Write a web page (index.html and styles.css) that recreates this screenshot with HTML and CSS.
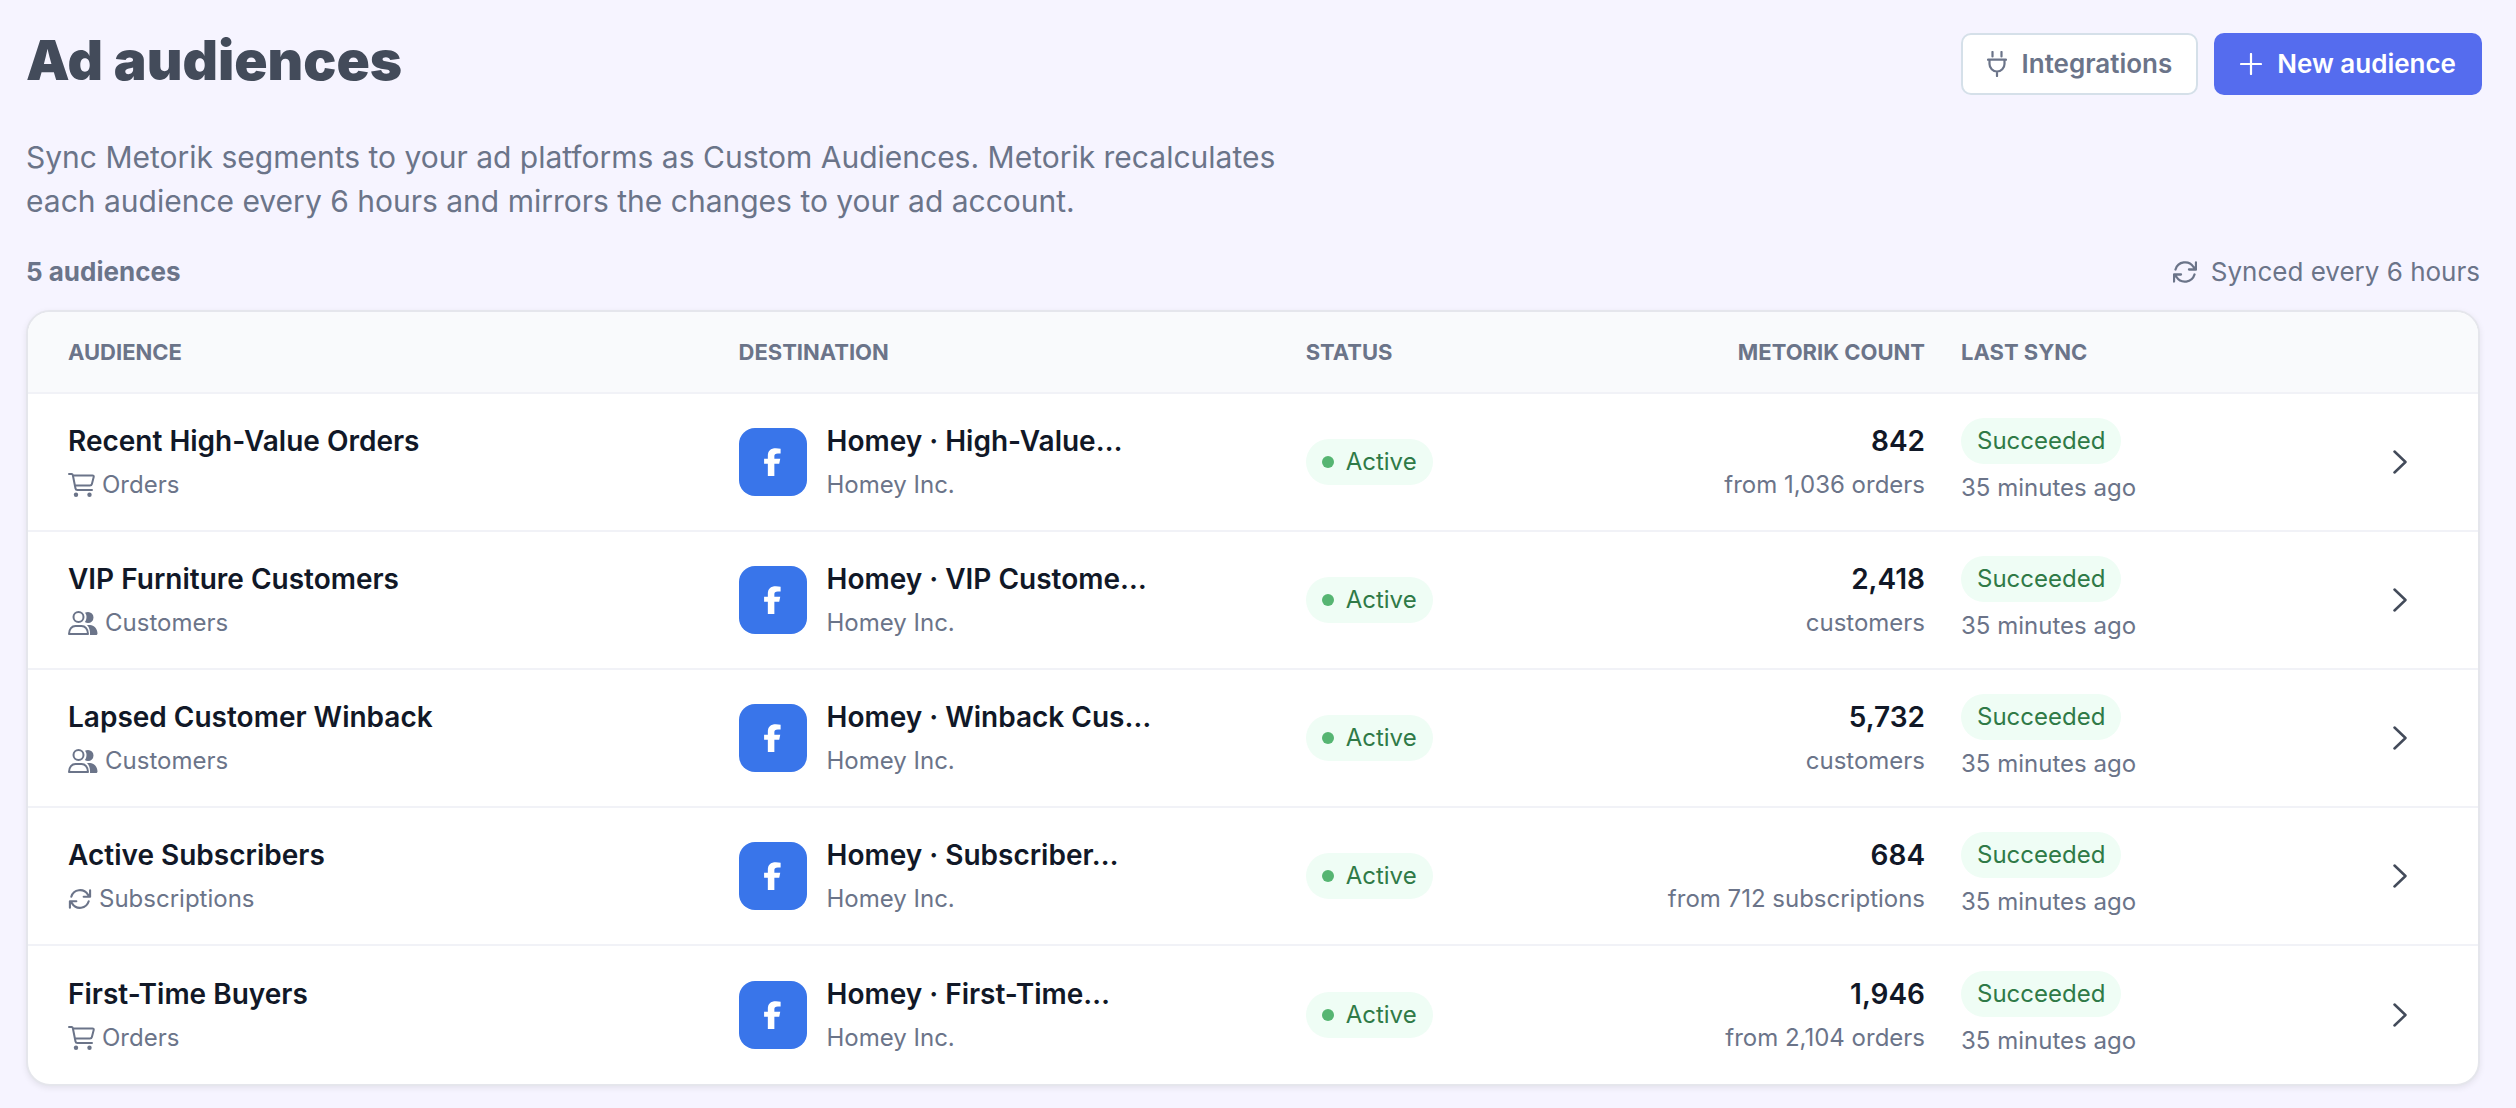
FILE: index.html
```html
<!DOCTYPE html>
<html lang="en">
<head>
<meta charset="utf-8">
<meta name="viewport" content="width=device-width, initial-scale=1">
<title>Ad audiences</title>
<link rel="stylesheet" href="styles.css">
</head>
<body>
<svg class="sprite" aria-hidden="true">
  <symbol id="i-cart" viewBox="0 0 27 24"><path d="M1 1h2.600q1 0 1.200 1l2.700 13.500q.3 1.500 1.800 1.500H24M5 2.500H24.500q1.600 0 1.200 1.500l-1.800 7q-.4 1.500-1.900 1.500H7" fill="none" stroke="currentColor" stroke-width="2" stroke-linecap="round" stroke-linejoin="round"/><circle cx="8" cy="21.700" r="2.200" fill="currentColor"/><circle cx="21.500" cy="21.700" r="2.200" fill="currentColor"/></symbol>
  <symbol id="i-users" viewBox="0 0 30 24"><circle cx="10.500" cy="6" r="5" fill="none" stroke="currentColor" stroke-width="2"/><path d="M1 23c0-5 3-8 6.500-8h6c3.500 0 6.500 3 6.500 8z" fill="none" stroke="currentColor" stroke-width="2" stroke-linejoin="round"/><path d="M17 1.800c1-.5 2-.8 3-.8a5.500 5.500 0 0 1 0 11c-1.200 0-2.300-.4-3.200-1 1.200-1.400 1.700-3.200 1.700-5 0-1.500-.5-3-1.500-4.200zM19 14h3c4 0 7.500 4 7.500 8.500 0 .8-.6 1.500-1.400 1.500H22c.3-4-.500-7.500-3-10z" fill="currentColor"/></symbol>
  <symbol id="i-sync" viewBox="0 0 24 24"><path d="M2.500 9.500A10 10 0 0 1 20.500 7l2.500 2.500M23 2.500v7h-7M21.500 14.500A10 10 0 0 1 3.500 17L1 14.500M1 21.500v-7h7" fill="none" stroke="currentColor" stroke-width="2.300" stroke-linecap="round" stroke-linejoin="round"/></symbol>
  <symbol id="i-fb" viewBox="0 0 18 30"><path d="M4 30V17H0v-5.500h4V8.600C4 3 7 .3 12.600.3c1.800 0 3.600.2 5.100.5v5h-2.900c-2.900 0-3.800 1-3.800 2.900v2.800h6.300L16.200 17H11v13z" fill="currentColor"/></symbol>
  <symbol id="i-chevron" viewBox="0 0 14 24"><path d="M1.500 1.500 12.500 12 1.500 22.500" fill="none" stroke="currentColor" stroke-width="2.500" stroke-linecap="round" stroke-linejoin="round"/></symbol>
</svg>
<main class="page">
  <header class="page-head">
    <h1 class="title">Ad audiences</h1>
    <div class="actions">
      <button type="button" class="btn btn-light"><svg class="icon-plug" viewBox="0 0 20 26" aria-hidden="true"><path d="M5.500 1v4.500M14.500 1v4.500M1 8.700h18M2.500 9v4a7.500 7.500 0 0 0 15 0V9M10 21v4" fill="none" stroke="currentColor" stroke-width="2.200" stroke-linecap="round"/></svg>Integrations</button>
      <button type="button" class="btn btn-primary"><svg class="icon-plus" viewBox="0 0 22 22" aria-hidden="true"><path d="M11 1v20M1 11h20" fill="none" stroke="currentColor" stroke-width="2.200" stroke-linecap="round"/></svg>New audience</button>
    </div>
  </header>
  <p class="intro">Sync Metorik segments to your ad platforms as Custom Audiences. Metorik recalculates each audience every 6 hours and mirrors the changes to your ad account.</p>
  <div class="summary">
    <strong class="total">5 audiences</strong>
    <span class="schedule"><svg class="icon-sync" aria-hidden="true"><use href="#i-sync"/></svg>Synced every 6 hours</span>
  </div>
  <div class="card">
    <table class="audiences">
      <thead>
        <tr><th class="c-name">Audience</th><th class="c-dest">Destination</th><th class="c-status">Status</th><th class="c-count">Metorik count</th><th class="c-sync">Last sync</th><th class="c-open" aria-label="Open"></th></tr>
      </thead>
      <tbody>
        <tr>
          <td class="c-name"><div class="name">Recent High-Value Orders</div><div class="sub"><svg class="icon-cart" aria-hidden="true"><use href="#i-cart"/></svg>Orders</div></td>
          <td><div class="dest"><span class="tile"><svg class="icon-fb" aria-hidden="true"><use href="#i-fb"/></svg></span><div><div class="name">Homey · High-Value…</div><div class="sub">Homey Inc.</div></div></div></td>
          <td><span class="pill"><span class="dot"></span>Active</span></td>
          <td class="c-count"><div class="name">842</div><div class="sub">from 1,036 orders</div></td>
          <td><span class="pill">Succeeded</span><div class="sub">35 minutes ago</div></td>
          <td class="c-open"><a class="open" href="#" aria-label="Open Recent High-Value Orders"><svg class="icon-chevron" aria-hidden="true"><use href="#i-chevron"/></svg></a></td>
        </tr>
        <tr>
          <td class="c-name"><div class="name">VIP Furniture Customers</div><div class="sub"><svg class="icon-users" aria-hidden="true"><use href="#i-users"/></svg>Customers</div></td>
          <td><div class="dest"><span class="tile"><svg class="icon-fb" aria-hidden="true"><use href="#i-fb"/></svg></span><div><div class="name">Homey · VIP Custome…</div><div class="sub">Homey Inc.</div></div></div></td>
          <td><span class="pill"><span class="dot"></span>Active</span></td>
          <td class="c-count"><div class="name">2,418</div><div class="sub">customers</div></td>
          <td><span class="pill">Succeeded</span><div class="sub">35 minutes ago</div></td>
          <td class="c-open"><a class="open" href="#" aria-label="Open VIP Furniture Customers"><svg class="icon-chevron" aria-hidden="true"><use href="#i-chevron"/></svg></a></td>
        </tr>
        <tr>
          <td class="c-name"><div class="name">Lapsed Customer Winback</div><div class="sub"><svg class="icon-users" aria-hidden="true"><use href="#i-users"/></svg>Customers</div></td>
          <td><div class="dest"><span class="tile"><svg class="icon-fb" aria-hidden="true"><use href="#i-fb"/></svg></span><div><div class="name">Homey · Winback Cus…</div><div class="sub">Homey Inc.</div></div></div></td>
          <td><span class="pill"><span class="dot"></span>Active</span></td>
          <td class="c-count"><div class="name">5,732</div><div class="sub">customers</div></td>
          <td><span class="pill">Succeeded</span><div class="sub">35 minutes ago</div></td>
          <td class="c-open"><a class="open" href="#" aria-label="Open Lapsed Customer Winback"><svg class="icon-chevron" aria-hidden="true"><use href="#i-chevron"/></svg></a></td>
        </tr>
        <tr>
          <td class="c-name"><div class="name">Active Subscribers</div><div class="sub"><svg class="icon-subs" aria-hidden="true"><use href="#i-sync"/></svg>Subscriptions</div></td>
          <td><div class="dest"><span class="tile"><svg class="icon-fb" aria-hidden="true"><use href="#i-fb"/></svg></span><div><div class="name">Homey · Subscriber…</div><div class="sub">Homey Inc.</div></div></div></td>
          <td><span class="pill"><span class="dot"></span>Active</span></td>
          <td class="c-count"><div class="name">684</div><div class="sub">from 712 subscriptions</div></td>
          <td><span class="pill">Succeeded</span><div class="sub">35 minutes ago</div></td>
          <td class="c-open"><a class="open" href="#" aria-label="Open Active Subscribers"><svg class="icon-chevron" aria-hidden="true"><use href="#i-chevron"/></svg></a></td>
        </tr>
        <tr>
          <td class="c-name"><div class="name">First-Time Buyers</div><div class="sub"><svg class="icon-cart" aria-hidden="true"><use href="#i-cart"/></svg>Orders</div></td>
          <td><div class="dest"><span class="tile"><svg class="icon-fb" aria-hidden="true"><use href="#i-fb"/></svg></span><div><div class="name">Homey · First-Time…</div><div class="sub">Homey Inc.</div></div></div></td>
          <td><span class="pill"><span class="dot"></span>Active</span></td>
          <td class="c-count"><div class="name">1,946</div><div class="sub">from 2,104 orders</div></td>
          <td><span class="pill">Succeeded</span><div class="sub">35 minutes ago</div></td>
          <td class="c-open"><a class="open" href="#" aria-label="Open First-Time Buyers"><svg class="icon-chevron" aria-hidden="true"><use href="#i-chevron"/></svg></a></td>
        </tr>
      </tbody>
    </table>
  </div>
</main>
</body>
</html>
```
FILE: styles.css
```css
* { box-sizing: border-box; }

body {
  margin: 0;
  background: #f6f4ff;
  color: #6b7489;
  font: 400 24px/36px Inter, "Liberation Sans", sans-serif;
}

svg { flex: none; display: block; }
.sprite { display: none; }

.page { padding: 33px 36px 22px 26px; }

.page-head {
  display: flex;
  align-items: flex-start;
  justify-content: space-between;
  margin-right: -2px;
}

.title {
  margin: 0;
  color: #434b5a;
  font: 900 55px/54px Inter, sans-serif;
}

.actions { display: flex; gap: 16px; }

.btn {
  display: flex;
  align-items: center;
  gap: 15px;
  height: 62px;
  padding: 0 26px;
  border: 0;
  border-radius: 10px;
  font: 600 26px/36px Inter, sans-serif;
}
.btn-light { background: #fff; color: #6b7489; border: 2px solid #d5e0e9; padding: 0 24px; }
.btn-primary { background: #556cee; color: #fff; }
.icon-plug { width: 20px; height: 26px; }
.icon-plus { width: 22px; height: 22px; }

.intro {
  max-width: 1280px;
  margin: 40px 0 0;
  font-size: 30px;
  line-height: 44px;
}

.summary {
  display: flex;
  align-items: center;
  justify-content: space-between;
  margin: 31px 0 20px;
  font-size: 26px;
}
.total { font-weight: 700; }
.schedule { display: flex; align-items: center; gap: 14px; }
.icon-sync { width: 24px; height: 24px; }

.card {
  overflow: hidden;
  background: #fff;
  border: 2px solid #e5e6ec;
  border-radius: 24px;
  box-shadow: 0 2px 6px rgb(0 0 0 / 8%);
}

.audiences { width: 100%; table-layout: fixed; border-collapse: separate; border-spacing: 0; }

th, td { padding: 0; text-align: left; vertical-align: middle; border-bottom: 2px solid #f1f2f7; }
th {
  height: 82px;
  background: #f9fafc;
  font-size: 22px;
  font-weight: 700;
  text-transform: uppercase;
}
td { height: 138px; }
tbody tr:last-child td { border-bottom: 0; }

.c-name { width: 29%; padding-left: 40px; }
.c-dest { width: 23.15%; }
.c-status { width: 12.05%; }
.c-count { width: 14.7%; padding-right: 36px; text-align: right; }
.c-open { width: 116px; padding-right: 40px; }

.name { color: #111827; font-size: 28px; font-weight: 600; line-height: 40px; }
.sub { display: flex; align-items: center; gap: 7px; margin-top: 6px; }
.c-count .sub { justify-content: flex-end; }
.icon-cart { width: 27px; height: 24px; }
.icon-users { width: 30px; height: 24px; }
.icon-subs { width: 24px; height: 22px; }

.dest { display: flex; align-items: center; gap: 20px; }
.tile {
  display: grid;
  place-items: center;
  flex: none;
  width: 68px;
  height: 68px;
  border-radius: 16px;
  background: #3975ea;
  color: #fff;
}
.icon-fb { width: 17px; height: 28px; }

.pill {
  display: inline-flex;
  align-items: center;
  gap: 12px;
  height: 46px;
  padding: 0 16px;
  border-radius: 23px;
  background: #effdf5;
  color: #2f7a47;
  vertical-align: top;
}
.dot { width: 12px; height: 12px; border-radius: 50%; background: #56b572; }

.open { display: grid; place-items: center; height: 76px; color: #434b5a; }
.icon-chevron { width: 14px; height: 24px; }
```
